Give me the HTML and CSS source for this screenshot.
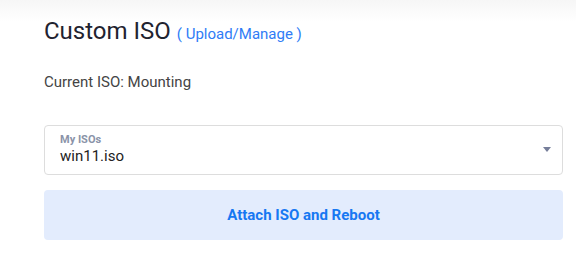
FILE: index.html
```html
<!DOCTYPE html>
<html lang="en">
<head>
  <meta charset="UTF-8" />
  <title>Custom ISO</title>
  <link rel="stylesheet" href="styles.css">
</head>
<body>

<div class="panel">
  <h2 class="title">Custom ISO <a class="manage-link" href="#">( Upload/Manage )</a></h2>

  <p class="current">Current ISO: Mounting</p>

  <!-- ISO picker -->
  <div class="picker">
    <div class="picker-text">
      <div class="picker-label">My ISOs</div>
      <div class="picker-value">win11.iso</div>
    </div>
    <span class="picker-arrow"></span>
  </div>

  <button class="attach-btn">Attach ISO and Reboot</button>
</div>

</body>
</html>
```

FILE: styles.css
```css
html {
  background: #fff;
}

body {
  margin: 0;
  background: linear-gradient(#f6f6f6, #fff 22px) no-repeat;
  font-family: Roboto, "Liberation Sans", sans-serif;
  color: #222;
}

.panel {
  padding: 16px 13px 0 44px;
}

.title {
  margin: 0;
  font-size: 24px;
  font-weight: 400;
  line-height: 30px;
  color: #1f2330;
}

.manage-link {
  font-size: 15px;
  color: #2f7cf6;
  text-decoration: none;
}

.current {
  margin: 23px 0 0;
  font-size: 15px;
  line-height: 20px;
  color: #444;
}

.picker {
  margin-top: 33px;
  height: 48px;
  border: 1px solid #dddddd;
  border-radius: 4px;
  display: flex;
  align-items: center;
  justify-content: space-between;
  padding: 0 11px 0 15px;
}

.picker-text {
  margin-top: -1px;
}

.picker-label {
  font-size: 11px;
  font-weight: 700;
  color: #8a93a8;
  line-height: 13px;
}

.picker-value {
  font-size: 15px;
  color: #222;
  line-height: 20px;
}

.picker-arrow {
  width: 0;
  height: 0;
  border-left: 4px solid transparent;
  border-right: 4px solid transparent;
  border-top: 5px solid #767e9a;
  margin-bottom: 1px;
}

.attach-btn {
  display: block;
  width: 100%;
  margin-top: 15px;
  height: 50px;
  border: none;
  border-radius: 4px;
  background: #e3ecfd;
  color: #1778f2;
  font-family: Roboto, "Liberation Sans", sans-serif;
  font-size: 15px;
  font-weight: 700;
  cursor: pointer;
}
```
